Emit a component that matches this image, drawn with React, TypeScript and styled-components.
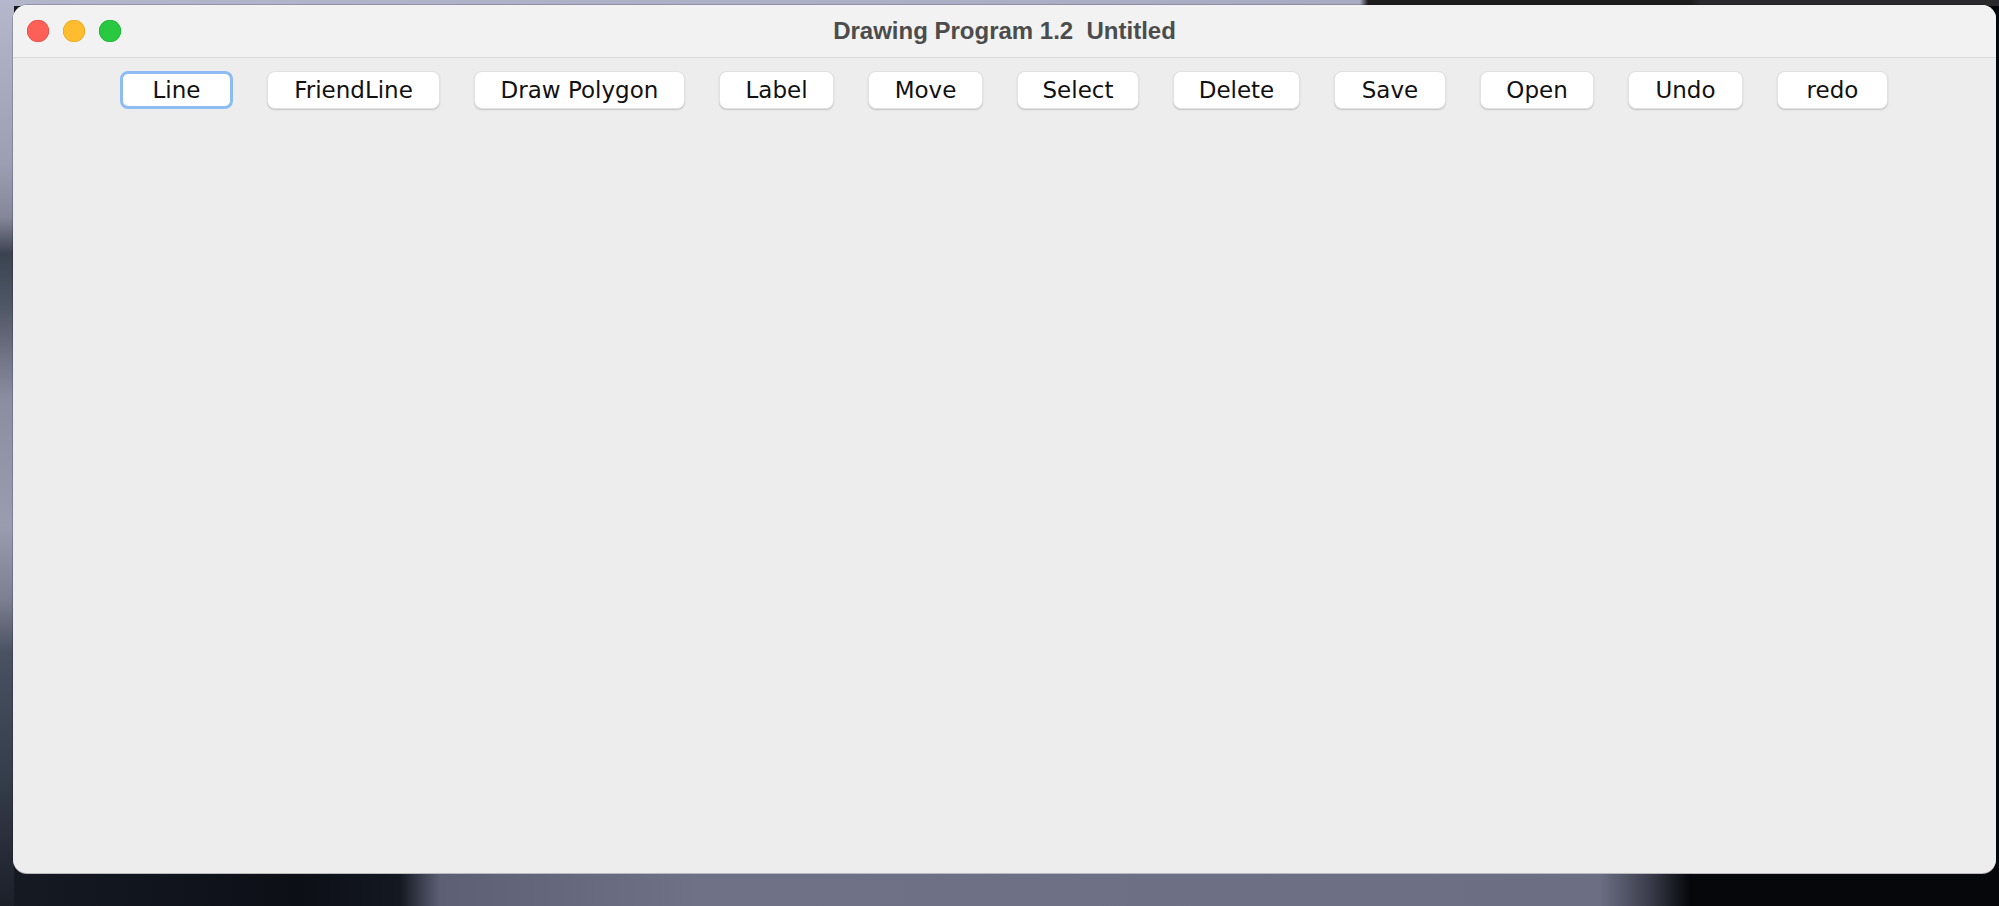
import React from 'react'
import styled, { createGlobalStyle } from 'styled-components'

const GlobalStyle = createGlobalStyle`
  html, body {
    margin: 0;
    padding: 0;
    height: 100%;
    overflow: hidden;
  }
  body {
    font-family: "DejaVu Sans", "Liberation Sans", sans-serif;
    background:
      linear-gradient(to bottom, #b5b7cc 0, #9c9eb3 18%, #858799 24%, #3b4250 28%, #505766 34%, #8b8da1 44%, #9a9cb0 58%, #7d8092 66%, #4a5262 72%, #353c4a 86%, #1b2029 100%) 0 0 / 14px 100% no-repeat,
      linear-gradient(to right, #b3b5cb 0, #a9abc2 1360px, #1d1d1d 1368px, #1d1d1d 1690px, #2a2a2c 1700px) 0 0 / 100% 6px no-repeat,
      linear-gradient(to right, #161a23 0, #0c0f16 300px, #141821 400px, #5d6075 440px, #6f7287 700px, #6c6f84 1600px, #3a3c4a 1650px, #05070a 1690px);
  }
`

const Desktop = styled.div`
  box-sizing: border-box;
  height: 906px;
  padding: 5px 3px 33px 13px;
  display: flex;
`

const Window = styled.div`
  flex: 1;
  display: flex;
  flex-direction: column;
  background: #ededed;
  border-radius: 14px;
  overflow: hidden;
  box-shadow: 0 1px 0 #b9b9bd, 0 0 0 0.5px rgba(0, 0, 0, 0.35);
`

const TitleBar = styled.div`
  position: relative;
  height: 52px;
  flex: none;
  display: flex;
  align-items: center;
  justify-content: center;
  background: #f2f2f2;
  border-bottom: 1px solid #d9d9d9;
`

const Lights = styled.div`
  position: absolute;
  left: 14px;
  top: 15px;
  display: flex;
  gap: 14px;
`

const Light = styled.span<{ $color: string; $edge: string }>`
  width: 22px;
  height: 22px;
  border-radius: 50%;
  background: ${({ $color }) => $color};
  box-shadow: inset 0 0 0 0.5px ${({ $edge }) => $edge};
`

const Title = styled.div`
  font-family: "Liberation Sans", Arial, sans-serif;
  font-weight: 700;
  font-size: 24px;
  color: #4c4c4c;
  white-space: pre;
`

const Toolbar = styled.div`
  display: flex;
  gap: 34px;
  padding: 13px 0 0 107px;
`

const ToolButton = styled.button<{ $w: number; $focused?: boolean }>`
  box-sizing: border-box;
  width: ${({ $w }) => $w}px;
  height: 38px;
  padding: 0;
  background: #ffffff;
  border-radius: 8px;
  border: ${({ $focused }) => ($focused ? '3px solid #8dbcf4' : '1px solid #e2e2e2')};
  box-shadow: ${({ $focused }) => ($focused ? 'none' : '0 1px 1.5px rgba(0, 0, 0, 0.18)')};
  font-family: "DejaVu Sans", "Liberation Sans", sans-serif;
  font-size: 23px;
  color: #111111;
  display: flex;
  align-items: center;
  justify-content: center;
  cursor: default;
  outline: none;
`

const Canvas = styled.div`
  flex: 1;
`

const buttons = [
  { label: 'Line', w: 113, focused: true },
  { label: 'FriendLine', w: 173 },
  { label: 'Draw Polygon', w: 211 },
  { label: 'Label', w: 115 },
  { label: 'Move', w: 115 },
  { label: 'Select', w: 122 },
  { label: 'Delete', w: 127 },
  { label: 'Save', w: 112 },
  { label: 'Open', w: 114 },
  { label: 'Undo', w: 115 },
  { label: 'redo', w: 111 },
]

const App = () => {
  return (
    <>
      <GlobalStyle />
      <Desktop>
        <Window>
          <TitleBar>
            <Lights>
              <Light $color="#fe5f57" $edge="#e2463f" />
              <Light $color="#febc2e" $edge="#e1a116" />
              <Light $color="#28c840" $edge="#14ae2a" />
            </Lights>
            <Title>{'Drawing Program 1.2  Untitled'}</Title>
          </TitleBar>
          <Toolbar>
            {buttons.map((b) => (
              <ToolButton key={b.label} $w={b.w} $focused={b.focused}>
                {b.label}
              </ToolButton>
            ))}
          </Toolbar>
          <Canvas />
        </Window>
      </Desktop>
    </>
  )
}

export default App
